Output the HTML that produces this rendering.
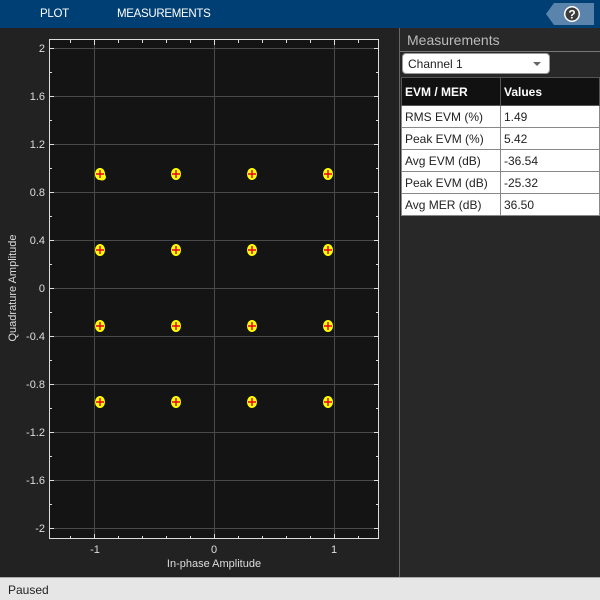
<!DOCTYPE html>
<html><head><meta charset="utf-8"><style>
*{margin:0;padding:0;box-sizing:border-box}
body{width:600px;height:600px;overflow:hidden;background:#222;font-family:"Liberation Sans",sans-serif;position:relative}
#top{position:absolute;left:0;top:0;width:600px;height:28px;background:#003f73}
#top span{position:absolute;top:8px;color:#fff;font-size:11.5px;letter-spacing:-0.3px}
#status{position:absolute;left:0;top:577px;width:600px;height:23px;background:#e6e6e6;border-top:1px solid #aaa;font-size:12px;color:#222;padding:5px 0 0 8px}
#right{position:absolute;left:399px;top:28px;width:201px;height:549px;background:#282828;border-left:1px solid #666}
#right .title{position:absolute;left:7px;top:4px;color:#bbb;font-size:14px}
#right .sep{position:absolute;left:0;top:23px;width:201px;height:1px;background:#777}
#dd{position:absolute;left:2px;top:25px;width:148px;height:21px;background:#fff;border-radius:4px;border:1px solid #999;font-size:12px;color:#222;padding:3px 0 0 5px}
#dd:after{content:"";position:absolute;right:8px;top:8px;border-left:4px solid transparent;border-right:4px solid transparent;border-top:4px solid #666}
table{position:absolute;left:1px;top:49px;width:199px;border-collapse:collapse;font-size:12px}
td,th{height:22px;border:1px solid #888;padding:0 3px;text-align:left;color:#222;background:#fff;font-weight:normal}
th{background:#111;color:#fff;font-weight:bold;height:28px;border-color:#555}
td:first-child,th:first-child{width:99px}
</style></head><body>
<div id="top"><span style="left:40px">PLOT</span><span style="left:117px">MEASUREMENTS</span>
<svg style="position:absolute;left:546px;top:3px" width="48" height="22"><polygon points="8,0 48,0 48,22 8,22 0,11" fill="#5b84ad"/><circle cx="26" cy="11" r="8" fill="#fff"/><circle cx="26" cy="11" r="6.5" fill="#3c3c3c"/><text x="26" y="15.5" text-anchor="middle" font-size="12" font-weight="bold" fill="#fff" font-family="Liberation Sans">?</text></svg>
</div>
<svg style="position:absolute;left:0;top:28px" width="399" height="549" font-family="Liberation Sans" font-size="11">
<g transform="translate(0,-28)">
<rect x="49" y="40" width="330" height="499" fill="#141414"/>
<g stroke="#4a4a4a" stroke-width="1">
<line x1="49" x2="379" y1="48.5" y2="48.5"/><line x1="49" x2="379" y1="96.5" y2="96.5"/><line x1="49" x2="379" y1="144.5" y2="144.5"/><line x1="49" x2="379" y1="192.5" y2="192.5"/><line x1="49" x2="379" y1="240.5" y2="240.5"/><line x1="49" x2="379" y1="288.5" y2="288.5"/><line x1="49" x2="379" y1="336.5" y2="336.5"/><line x1="49" x2="379" y1="384.5" y2="384.5"/><line x1="49" x2="379" y1="432.5" y2="432.5"/><line x1="49" x2="379" y1="480.5" y2="480.5"/><line x1="49" x2="379" y1="528.5" y2="528.5"/>
<line x1="94.5" x2="94.5" y1="40" y2="539"/><line x1="214.5" x2="214.5" y1="40" y2="539"/><line x1="334.5" x2="334.5" y1="40" y2="539"/>
</g>
<rect x="49.5" y="39.5" width="329" height="499" fill="none" stroke="#ddd"/>
<g stroke="#ddd">
<path d="M49 72.5h3M49 120.5h3M49 168.5h3M49 216.5h3M49 264.5h3M49 312.5h3M49 360.5h3M49 408.5h3M49 456.5h3M49 504.5h3M49 48.5h5M49 96.5h5M49 144.5h5M49 192.5h5M49 240.5h5M49 288.5h5M49 336.5h5M49 384.5h5M49 432.5h5M49 480.5h5M49 528.5h5"/>
<path d="M379 72.5h-3M379 120.5h-3M379 168.5h-3M379 216.5h-3M379 264.5h-3M379 312.5h-3M379 360.5h-3M379 408.5h-3M379 456.5h-3M379 504.5h-3M379 48.5h-5M379 96.5h-5M379 144.5h-5M379 192.5h-5M379 240.5h-5M379 288.5h-5M379 336.5h-5M379 384.5h-5M379 432.5h-5M379 480.5h-5M379 528.5h-5"/>
<path d="M70.5 539v-3M118.5 539v-3M142.5 539v-3M166.5 539v-3M190.5 539v-3M238.5 539v-3M262.5 539v-3M286.5 539v-3M310.5 539v-3M358.5 539v-3M94.5 539v-5M214.5 539v-5M334.5 539v-5"/>
<path d="M70.5 40v3M118.5 40v3M142.5 40v3M166.5 40v3M190.5 40v3M238.5 40v3M262.5 40v3M286.5 40v3M310.5 40v3M358.5 40v3M94.5 40v5M214.5 40v5M334.5 40v5"/>
</g>
<g fill="#ddd" text-anchor="end">
<text x="45" y="52">2</text><text x="45" y="100">1.6</text><text x="45" y="148">1.2</text><text x="45" y="196">0.8</text><text x="45" y="244">0.4</text><text x="45" y="292">0</text><text x="45" y="340">-0.4</text><text x="45" y="388">-0.8</text><text x="45" y="436">-1.2</text><text x="45" y="484">-1.6</text><text x="45" y="532">-2</text>
</g>
<g fill="#ddd" text-anchor="middle">
<text x="95" y="553">-1</text><text x="214" y="553">0</text><text x="334" y="553">1</text>
<text x="214" y="567" font-size="11">In-phase Amplitude</text>
<text transform="translate(16,288) rotate(-90)" font-size="11">Quadrature Amplitude</text>
</g>
<defs><g id="m"><ellipse cx="0" cy="0" rx="5" ry="6" fill="#ffff00"/><path d="M-4 0h8M0 -4v8" stroke="#e8001c" stroke-width="1.5"/></g></defs>
<use href="#m" x="100" y="174"/><use href="#m" x="176" y="174"/><use href="#m" x="252" y="174"/><use href="#m" x="328" y="174"/>
<ellipse cx="102" cy="177" rx="4" ry="3.5" fill="#ff0"/><use href="#m" x="100" y="174"/>
<use href="#m" x="100" y="250"/><use href="#m" x="176" y="250"/><use href="#m" x="252" y="250"/><use href="#m" x="328" y="250"/>
<use href="#m" x="100" y="326"/><use href="#m" x="176" y="326"/><use href="#m" x="252" y="326"/><use href="#m" x="328" y="326"/>
<use href="#m" x="100" y="402"/><use href="#m" x="176" y="402"/><use href="#m" x="252" y="402"/><use href="#m" x="328" y="402"/>
</g></svg>
<div id="right"><div class="title">Measurements</div><div class="sep"></div>
<div id="dd">Channel 1</div>
<table><tr><th>EVM / MER</th><th>Values</th></tr>
<tr><td>RMS EVM (%)</td><td>1.49</td></tr>
<tr><td>Peak EVM (%)</td><td>5.42</td></tr>
<tr><td>Avg EVM (dB)</td><td>-36.54</td></tr>
<tr><td>Peak EVM (dB)</td><td>-25.32</td></tr>
<tr><td>Avg MER (dB)</td><td>36.50</td></tr></table>
</div>
<div id="status">Paused</div>
</body></html>
